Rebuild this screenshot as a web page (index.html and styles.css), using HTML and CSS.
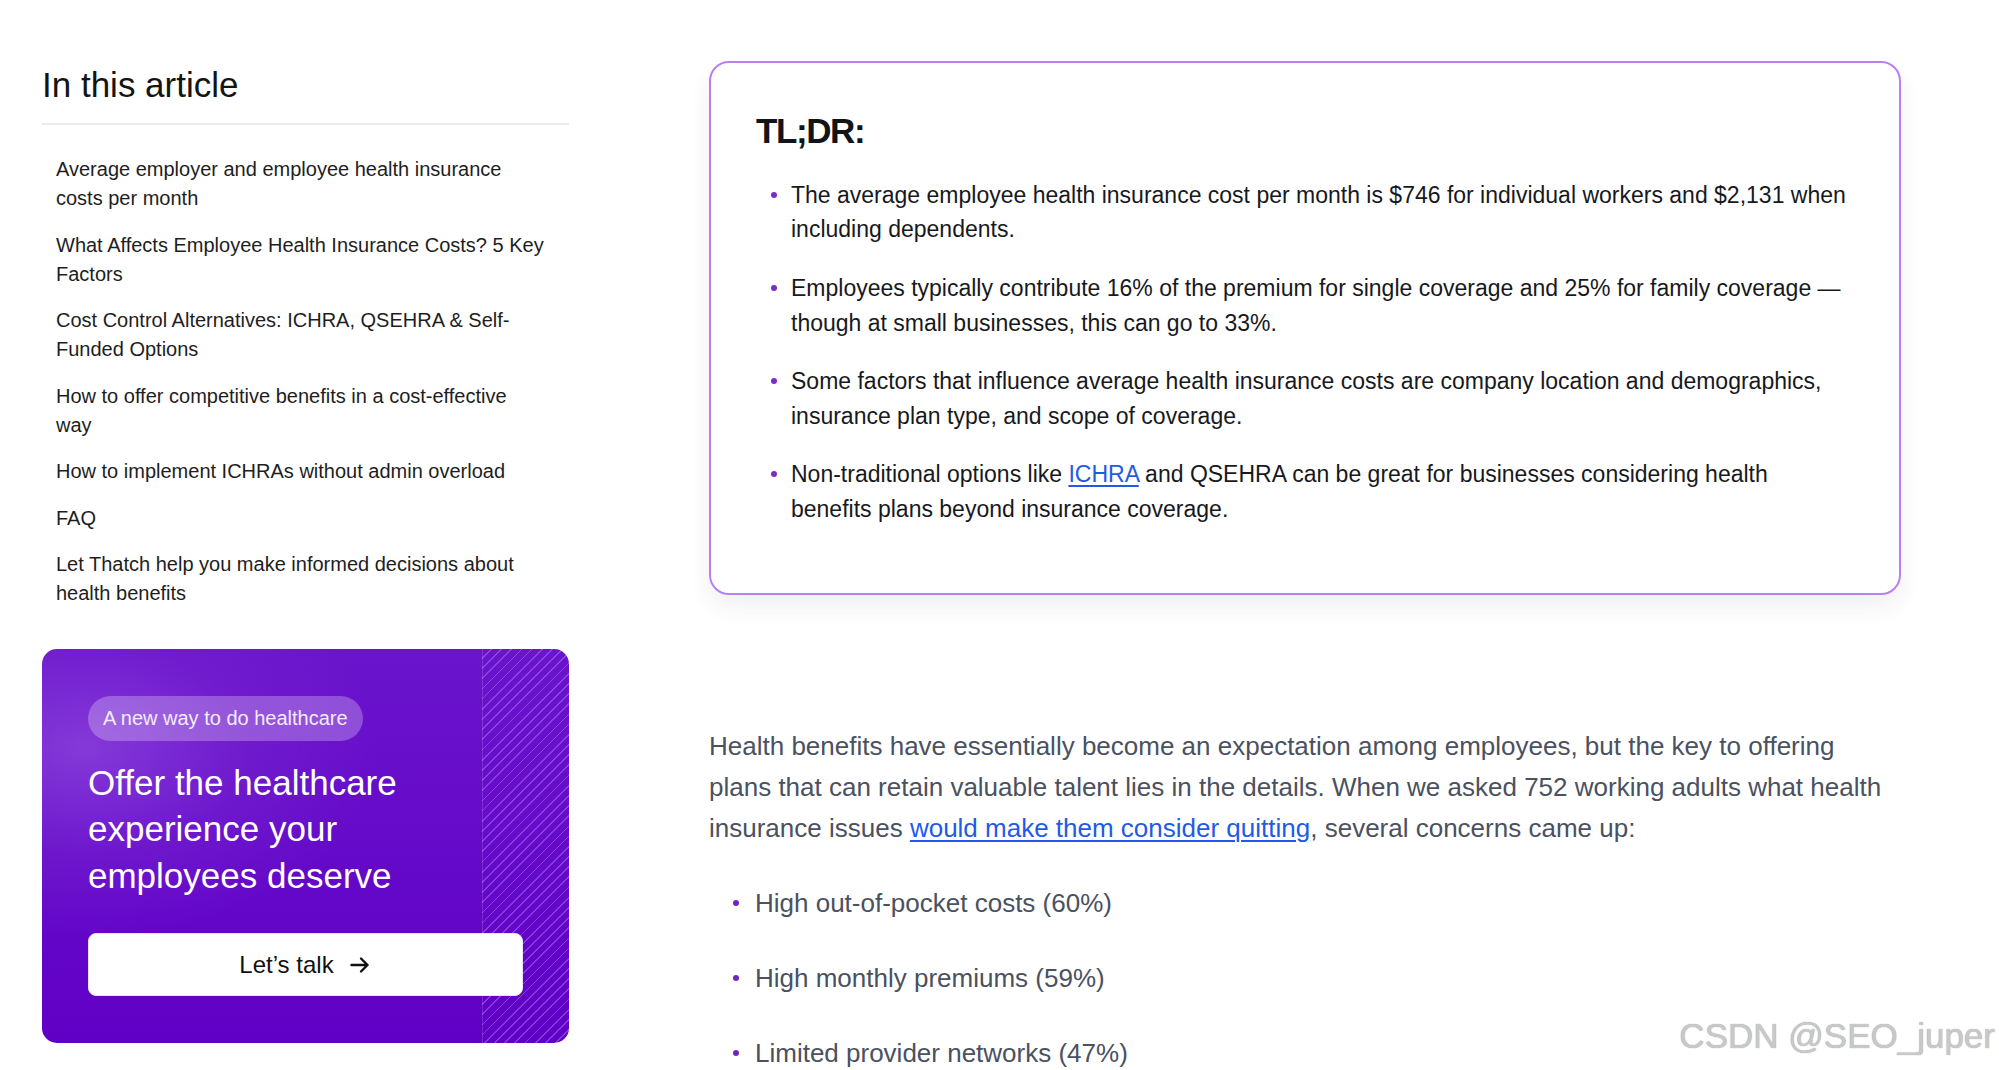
FILE: index.html
```html
<!DOCTYPE html>
<html lang="en">
<head>
<meta charset="utf-8">
<title>Employee health insurance costs</title>
<link rel="stylesheet" href="styles.css">
</head>
<body>
<div class="page">
  <aside class="sidebar">
    <h2 class="toc-title">In this article</h2>
    <ul class="toc">
      <li>Average employer and employee health insurance costs per month</li>
      <li>What Affects Employee Health Insurance Costs? 5 Key Factors</li>
      <li>Cost Control Alternatives: ICHRA, QSEHRA &amp; Self-Funded Options</li>
      <li>How to offer competitive benefits in a cost-effective way</li>
      <li>How to implement ICHRAs without admin overload</li>
      <li>FAQ</li>
      <li>Let Thatch help you make informed decisions about health benefits</li>
    </ul>
    <div class="promo">
      <span class="pill">A new way to do healthcare</span>
      <h3 class="promo-title">Offer the healthcare experience your employees deserve</h3>
      <a class="btn" href="#">Let’s talk
        <svg class="arrow" viewBox="0 0 24 24" width="24" height="24" aria-hidden="true"><path d="M3.5 12h16M13 5.5l6.5 6.5-6.5 6.5" fill="none" stroke="#111" stroke-width="2.4" stroke-linecap="round" stroke-linejoin="round"/></svg>
      </a>
    </div>
  </aside>
  <main class="content">
    <section class="tldr">
      <h2 class="tldr-title">TL;DR:</h2>
      <ul class="tldr-list">
        <li>The average employee health insurance cost per month is $746 for individual workers and $2,131 when including dependents.</li>
        <li>Employees typically contribute 16% of the premium for single coverage and 25% for family coverage — though at small businesses, this can go to 33%.</li>
        <li>Some factors that influence average health insurance costs are company location and demographics, insurance plan type, and scope of coverage.</li>
        <li>Non-traditional options like <a href="#">ICHRA</a> and QSEHRA can be great for businesses considering health benefits plans beyond insurance coverage.</li>
      </ul>
    </section>
    <p class="lead">Health benefits have essentially become an expectation among employees, but the key to offering plans that can retain valuable talent lies in the details. When we asked 752 working adults what health insurance issues <a href="#">would make them consider quitting</a>, several concerns came up:</p>
    <ul class="concerns">
      <li>High out-of-pocket costs (60%)</li>
      <li>High monthly premiums (59%)</li>
      <li>Limited provider networks (47%)</li>
    </ul>
  </main>
</div>
<div class="watermark">CSDN @SEO_juper</div>
</body>
</html>
```

FILE: styles.css
```css
html, body {
  margin: 0;
  padding: 0;
  background: #ffffff;
  overflow: hidden;
  height: 1070px;
}

body {
  font-family: "Liberation Sans", Arial, sans-serif;
  color: #1c1c1c;
}

.page {
  display: flex;
  align-items: flex-start;
  gap: 140px;
  padding: 61px 0 0 42px;
}

/* ---------- Sidebar ---------- */
.sidebar {
  width: 527px;
  flex: none;
  display: flex;
  flex-direction: column;
}

.toc-title {
  margin: 3px 0 0;
  padding-bottom: 17px;
  border-bottom: 2px solid #ebebeb;
  font-size: 35px;
  line-height: 42px;
  font-weight: 400;
  color: #141414;
}

.toc {
  list-style: none;
  margin: 30px 0 0;
  padding: 0 22px 0 14px;
  display: flex;
  flex-direction: column;
  gap: 17px;
}

.toc li {
  width: 490.8px;
  font-size: 20px;
  line-height: 29.3px;
  color: #1e1e1e;
}

.promo {
  margin-top: 40px;
  border-radius: 15px;
  padding: 47px 46px;
  display: flex;
  flex-direction: column;
  align-items: flex-start;
  color: #ffffff;
  background:
    linear-gradient(90deg, rgba(255,255,255,0.14), rgba(255,255,255,0.14)) right 86px top 0 / 1px 100% no-repeat,
    repeating-linear-gradient(135deg, rgba(255,255,255,0) 0 6px, rgba(185,140,255,0.42) 6px 7.2px) right top / 87px 100% no-repeat,
    radial-gradient(ellipse 70% 60% at 8% 25%, rgba(135,62,218,0.9) 0%, rgba(118,36,208,0.5) 45%, rgba(98,0,200,0) 80%),
    linear-gradient(180deg, #6a14cc 0%, #6000c6 100%);
}

.pill {
  display: inline-block;
  height: 45px;
  line-height: 45px;
  padding: 0 15px;
  border-radius: 23px;
  background: rgba(255, 255, 255, 0.26);
  font-size: 20px;
  color: #f3ecff;
}

.promo-title {
  margin: 19px 0 34px;
  max-width: 400px;
  font-size: 35px;
  line-height: 46.5px;
  font-weight: 400;
  color: #ffffff;
}

.btn {
  align-self: stretch;
  height: 63px;
  border-radius: 8px;
  background: #ffffff;
  border: 1px solid #e4e4ea;
  box-sizing: border-box;
  display: flex;
  align-items: center;
  justify-content: center;
  gap: 14px;
  font-size: 24px;
  color: #111111;
  text-decoration: none;
}

.arrow {
  display: block;
}

/* ---------- Content ---------- */
.content {
  width: 1192px;
  flex: none;
}

.tldr {
  box-sizing: border-box;
  width: 1192px;
  border: 2px solid #b880f2;
  border-radius: 20px;
  padding: 47px 48px 67px 45px;
  box-shadow: 0 12px 22px rgba(60, 40, 90, 0.07);
}

.tldr-title {
  margin: 0 0 26px;
  font-size: 35px;
  line-height: 42px;
  font-weight: 700;
  letter-spacing: -0.04em;
  color: #111418;
}

.tldr-list {
  list-style: none;
  margin: 0;
  padding: 0 0 0 35px;
  display: flex;
  flex-direction: column;
  gap: 24.3px;
}

.tldr-list li {
  font-size: 23px;
  line-height: 34.4px;
  color: #17191d;
}

.tldr-list li::before {
  content: "";
  display: inline-block;
  width: 6px;
  height: 6px;
  border-radius: 50%;
  background: #7a2cc8;
  margin: 0 14px 0 -20px;
  vertical-align: 0.22em;
}

.tldr-list a,
.lead a {
  color: #1f5ae8;
  text-decoration: underline;
  text-underline-offset: 3px;
  text-decoration-thickness: 1.5px;
}

.lead {
  margin: 131px 0 0;
  width: 1180px;
  font-size: 26px;
  line-height: 40.8px;
  color: #4a5160;
}

.concerns {
  list-style: none;
  margin: 34px 0 0;
  padding: 0 0 0 46px;
  display: flex;
  flex-direction: column;
  gap: 34.2px;
}

.concerns li {
  font-size: 26px;
  line-height: 40.8px;
  color: #4a5160;
}

.concerns li::before {
  content: "";
  display: inline-block;
  width: 6px;
  height: 6px;
  border-radius: 50%;
  background: #6f26bf;
  margin: 0 16px 0 -22px;
  vertical-align: 0.22em;
}

/* ---------- Watermark overlay ---------- */
.watermark {
  position: absolute;
  right: 4px;
  bottom: 17px;
  font-family: "Liberation Sans", Arial, sans-serif;
  font-size: 35px;
  line-height: 35px;
  color: rgba(205, 205, 205, 0.95);
  text-shadow: 0 0 1px #8a8a8a, 1px 1px 1px #ffffff;
  white-space: nowrap;
}
```
